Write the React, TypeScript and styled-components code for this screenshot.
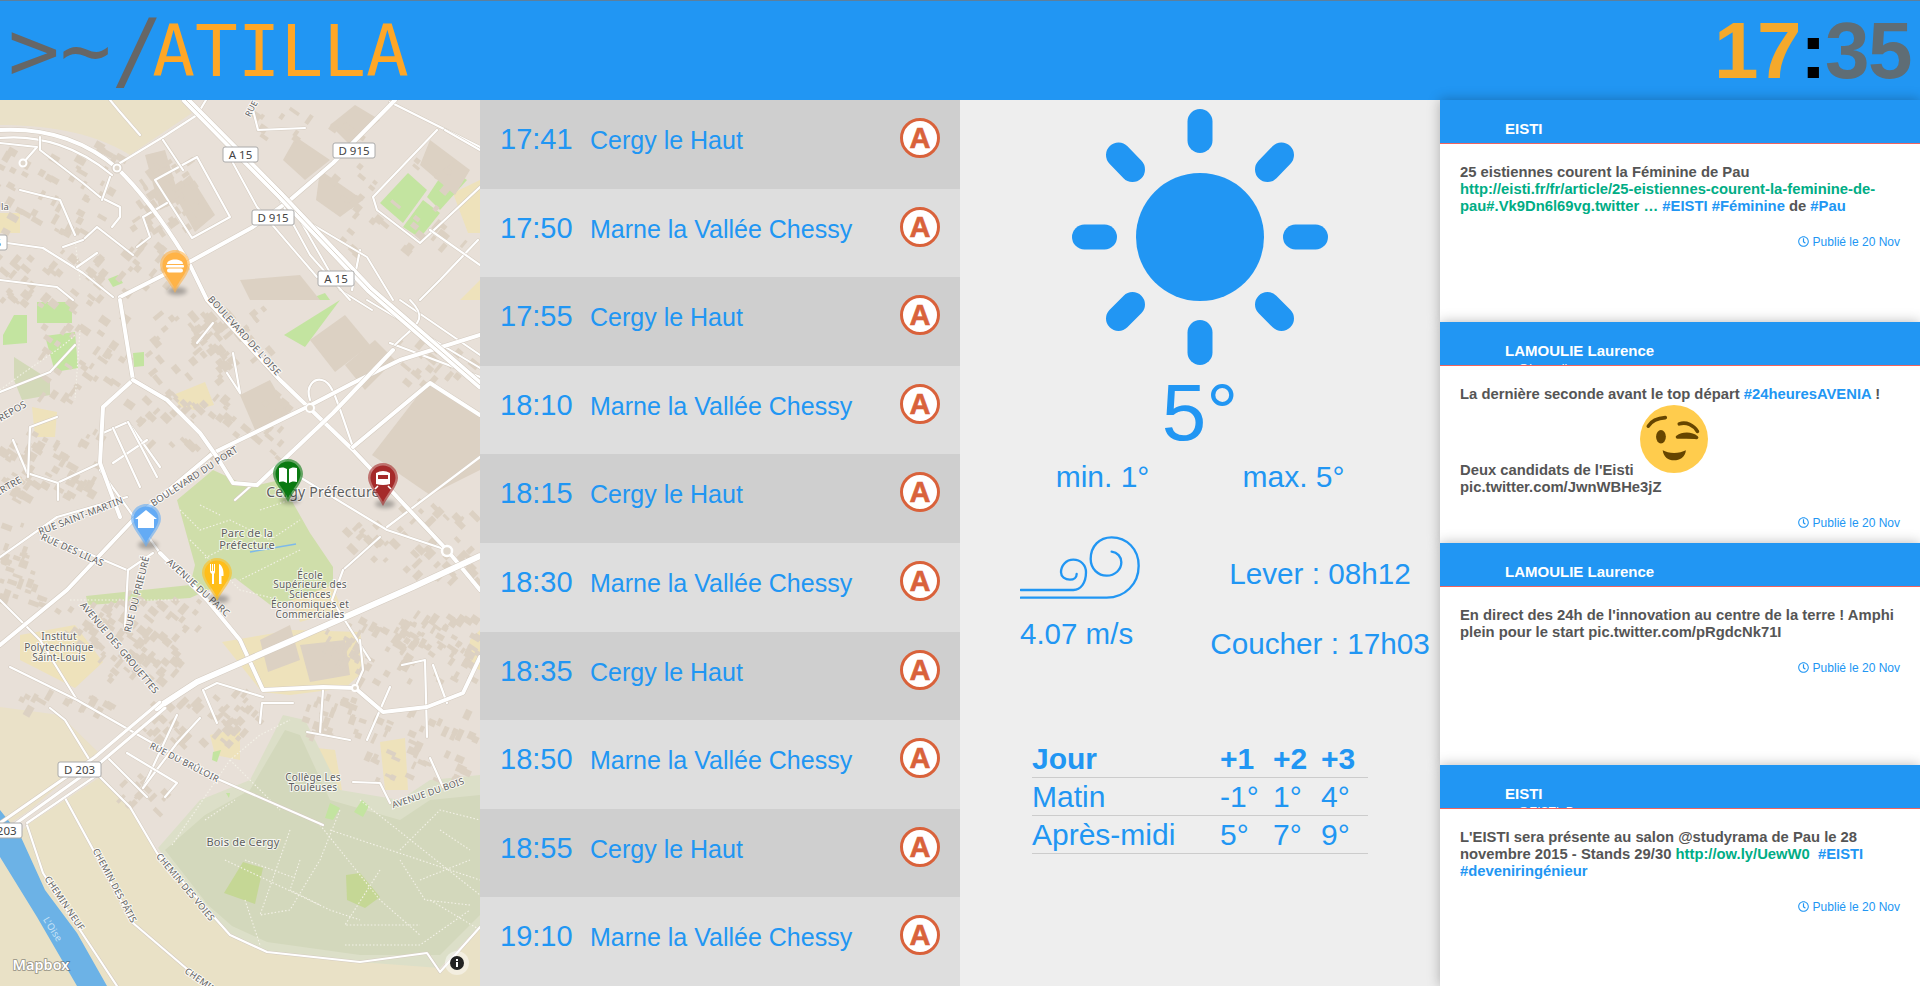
import React from "react";
import styled, { createGlobalStyle } from "styled-components";
import { FaRegClock } from "react-icons/fa";

const Global = createGlobalStyle`
  html, body { margin: 0; padding: 0; height: 100%; overflow: hidden; background: #fff; }
  #root { height: 986px; }
  * { box-sizing: border-box; }
`;

const BLUE = "#2196f3";
const SANS = `"Liberation Sans", Arial, sans-serif`;
const MONO = `"DejaVu Sans Mono", "Liberation Mono", monospace`;

const Page = styled.div`
  width: 1920px;
  height: 986px;
  display: flex;
  flex-direction: column;
  font-family: ${SANS};
  color: ${BLUE};
`;
const TopBar = styled.header`
  flex: 0 0 100px;
  background: ${BLUE};
  border-top: 1px solid #5d7f9c;
  display: flex;
  justify-content: space-between;
  padding: 0 9px 0 8px;
  overflow: hidden;
`;
const Logo = styled.div`
  font-family: ${MONO};
  line-height: 98px;
  white-space: nowrap;
  height: 98px;
`;
const Prompt = styled.span`
  font-size: 86px;
  color: #666;
`;
const Brand = styled.span`
  font-size: 71px;
  color: #ffa726;
  margin-left: -11px;
  vertical-align: 4px;
`;
const Clock = styled.div`
  font-size: 80px;
  font-weight: 700;
  line-height: 100px;
  letter-spacing: -1.5px;
`;
const ClockPart = styled.span<{ $c: string }>`
  color: ${(p) => p.$c};
`;
const Columns = styled.main`
  flex: 1;
  display: grid;
  grid-template-columns: repeat(4, 480px);
  min-height: 0;
`;
const MapPanel = styled.section`
  overflow: hidden;
  background: #e8e0d8;
  & > svg { display: block; }
`;
const Trains = styled.section`
  display: grid;
  grid-template-rows: repeat(10, 1fr);
`;
const TrainRow = styled.div<{ $odd: boolean }>`
  background: ${(p) => (p.$odd ? "#cfcfcf" : "#dedede")};
  display: flex;
  align-items: flex-start;
  padding: 19px 20px 0 20px;
  min-height: 0;
`;
const TrainTime = styled.span`
  flex: 0 0 90px;
  font-size: 29px;
  line-height: 41px;
`;
const TrainDest = styled.span`
  flex: 1;
  font-size: 25px;
  line-height: 43px;
`;
const LineBadge = styled.span`
  flex: 0 0 40px;
  width: 40px;
  height: 40px;
  margin-top: -1px;
  border-radius: 50%;
  border: 3px solid #d9623b;
  background: #fff;
  color: #d9623b;
  font-size: 29px;
  font-weight: 700;
  line-height: 34px;
  text-align: center;
  -webkit-text-stroke: 0.6px #d9623b;
`;
const Weather = styled.section`
  background: #eee;
  display: flex;
  flex-direction: column;
`;
const SunBox = styled.div`
  height: 274px;
  display: flex;
  justify-content: center;
`;
const Temp = styled.div`
  font-size: 80px;
  line-height: 80px;
  text-align: center;
  margin-top: -1px;
`;
const MinMax = styled.div`
  display: grid;
  grid-template-columns: 191px 191px;
  justify-content: center;
  font-size: 30px;
  line-height: 34px;
  text-align: center;
  margin-top: 7px;
  padding-right: 4px;
`;
const Sky = styled.div`
  display: grid;
  grid-template-columns: 240px 240px;
  margin-top: 41px;
`;
const WindCol = styled.div`
  padding-left: 60px;
  & > svg { display: block; }
`;
const WindValue = styled.div`
  font-size: 29.5px;
  line-height: 34px;
  margin-top: 16px;
`;
const SunCol = styled.div`
  text-align: center;
  font-size: 29.7px;
  line-height: 34px;
  white-space: nowrap;
  padding-top: 22px;
`;
const SunLine = styled.div`
  margin-bottom: 36px;
`;
const ForecastWrap = styled.div`
  margin-top: 43px;
`;
const Forecast = styled.table`
  width: 336px;
  margin: 0 0 0 72px;
  border-collapse: collapse;
  font-size: 30px;
  line-height: 37px;
`;
const FCell = styled.td<{ $w?: number }>`
  padding: 0;
  border-bottom: 1px solid #ccc;
  width: ${(p) => (p.$w ? `${p.$w}px` : "auto")};
`;
const FHead = styled(FCell).attrs({ as: "th" })`
  font-weight: 700;
  text-align: left;
`;
const Tweets = styled.section`
  display: grid;
  grid-template-rows: repeat(4, 1fr);
  min-height: 0;
`;
const Card = styled.article`
  background: #fff;
  box-shadow: 0 0 12px rgba(0, 0, 0, 0.28);
  min-height: 0;
`;
const CardHead = styled.div`
  height: 44px;
  background: ${BLUE};
  border-bottom: 1px solid #f0645f;
  padding: 20px 0 0 65px;
  overflow: hidden;
  color: #fff;
  font-weight: 700;
  font-size: 15px;
  line-height: 18px;
`;
const Handle = styled.div`
  padding-left: 12px;
  font-size: 12px;
  font-weight: 400;
`;
const CardBody = styled.div`
  padding: 20px 20px 0 20px;
`;
const TweetText = styled.div`
  font-size: 14.8px;
  font-weight: 700;
  line-height: 17px;
  color: #555;
`;
const Link = styled.span`
  color: #00ad85;
`;
const Tag = styled.span`
  color: ${BLUE};
`;
const Stamp = styled.div`
  margin-top: 19px;
  font-size: 12px;
  line-height: 16px;
  text-align: right;
  color: ${BLUE};
  & svg { vertical-align: -1px; margin-right: 4px; }
`;
const Wink = styled.svg`
  width: 68px;
  height: 68px;
  margin: 2px 0 0 6px;
  vertical-align: 2px;
`;
const MapLabel = styled.text<{ $size?: number; $c?: string; $halo?: boolean }>`
  font-family: "Noto Sans", "Open Sans", sans-serif;
  font-size: ${(p) => p.$size ?? 9.5}px;
  fill: ${(p) => p.$c ?? "#5f5f5f"};
  stroke: ${(p) => (p.$halo === false ? "none" : "rgba(255, 255, 255, 0.75)")};
  stroke-width: 2px;
  paint-order: stroke;
  text-anchor: middle;
  letter-spacing: 0.2px;
`;
const ShieldText = styled.text`
  font-family: "Noto Sans", sans-serif;
  font-size: 11.5px;
  fill: #444;
  text-anchor: middle;
`;
const MapboxMark = styled.text`
  font-family: "Noto Sans", "Open Sans", sans-serif;
  font-size: 14.5px;
  font-weight: 600;
  fill: #fff;
  stroke: rgba(70, 70, 70, 0.55);
  stroke-width: 1.6px;
  paint-order: stroke;
  text-anchor: middle;
`;

/* ---------- map data: coordinates are page pixels ---------- */
function rng(seed: number) {
  let s = seed;
  return () => {
    s = (s * 16807) % 2147483647;
    return s / 2147483647;
  };
}
type Zone = [number, number, number, number, number, number];
const zones: Zone[] = [
  [136, 160, 60, 70, 40, 55], [0, 140, 120, 90, 50, 30], [0, 250, 110, 50, 40, 40], [40, 300, 90, 100, 40, 35],
  [150, 310, 100, 70, 50, 50], [145, 385, 60, 60, 30, 45], [215, 390, 70, 70, 30, 40], [10, 430, 90, 70, 50, 30],
  [0, 520, 40, 90, 30, 20], [60, 600, 70, 40, 30, 35], [120, 590, 80, 50, 30, 40], [100, 640, 80, 40, 36, 40],
  [20, 690, 90, 20, 16, 30], [140, 700, 110, 40, 40, 45], [210, 690, 50, 50, 18, 40], [330, 620, 150, 60, 70, 30],
  [300, 695, 60, 40, 26, 20], [370, 710, 110, 70, 44, 25], [400, 610, 80, 50, 40, 35], [125, 770, 40, 40, 14, 45],
  [340, 160, 130, 90, 40, 40], [400, 340, 80, 40, 20, 40], [250, 105, 130, 30, 16, 35], [400, 500, 80, 80, 40, 45],
  [210, 300, 60, 60, 24, 50], [330, 520, 70, 40, 16, 45], [120, 240, 70, 50, 26, 40], [0, 440, 40, 50, 16, 35],
];
const buildings: { x: number; y: number; w: number; h: number; a: number }[] = [];
{
  const r = rng(4242);
  zones.forEach(([x, y, w, h, n, a]) => {
    for (let i = 0; i < n; i++) {
      buildings.push({ x: x + r() * w, y: y + r() * h, w: 4 + r() * 8, h: 3 + r() * 5, a: a + (r() > 0.5 ? 90 : 0) });
    }
  });
}
const bigBlocks = [
  "M296 137 L330 160 L305 180 L283 160 Z", "M320 170 L363 200 L340 217 L316 200 Z", "M145 155 L165 150 L180 200 L160 210 Z",
  "M190 175 L215 215 L195 232 L172 190 Z", "M330 125 L355 105 L380 120 L350 145 Z", "M240 280 L300 275 L320 300 L250 300 Z",
  "M430 140 L470 170 L455 195 L420 165 Z", "M430 380 L480 415 L480 470 L430 495 L372 455 Z", "M345 365 L375 340 L395 360 L365 390 Z",
  "M310 340 L345 315 L370 345 L335 372 Z", "M240 395 L270 380 L290 415 L255 430 Z", "M260 640 L290 625 L300 660 L268 672 Z",
  "M300 645 L345 640 L350 675 L310 682 Z",
];
const schools = [
  "M0 213 H20 V233 H0 Z", "M32 407 L57 412 L55 437 L35 437 Z", "M173 395 L205 382 L214 405 L195 410 L180 407 Z",
  "M283 575 L325 566 L342 610 L300 622 Z", "M20 635 L75 625 L103 662 L75 688 L20 660 Z", "M222 642 L293 630 L360 632 L365 670 L345 688 L290 695 L262 692 Z",
  "M210 735 L240 728 L240 760 L215 755 Z", "M290 745 L335 750 L342 790 L325 817 L287 798 Z", "M380 742 L405 738 L408 790 L385 790 Z",
  "M453 193 L480 180 L480 233 L468 233 Z", "M460 300 L480 280 V300 Z", "M470 640 L480 630 L480 670 L468 665 Z",
];
const greens = [
  "M380 203 L408 173 L427 190 L403 223 Z", "M427 197 L447 167 L467 180 L440 210 Z", "M403 227 L423 200 L440 213 L420 238 Z",
  "M37 302 L72 302 L72 323 L37 323 Z", "M3 335 L14 315 L27 315 L27 343 L3 345 Z", "M45 336 L75 332 L78 368 L55 372 Z",
  "M133 353 L144 352 L144 366 L134 367 Z", "M284 335 L340 300 L305 347 Z", "M108 279 L118 275 L123 283 L113 287 Z",
  "M317 296 L325 293 L330 300 H317 Z", "M213 752 L221 750 L217 762 L212 760 Z", "M330 803 L340 808 L333 820 L325 818 Z",
  "M362 800 L369 806 L363 817 L354 812 Z", "M226 793 L230 793 L229 798 Z",
];
const road1 = [
  "M0 130 C40 128 82 138 117 168 C150 200 175 240 190 265 L207 300 L280 380 L353 450 L447 550 L480 590",
  "M395 100 L333 163 L290 200 L253 227 L193 260 L120 297",
  "M0 645 L67 590 L133 520 L213 453 L307 407 L353 383 L400 360 L480 335",
  "M120 300 L133 380 L103 407 L100 463 L120 517",
  "M133 380 L167 400 L200 433 L217 457 L233 483 L257 485 L333 413 L393 350",
  "M353 447 L430 383 L480 415",
  "M160 553 L207 600 L240 640 L263 690 L323 687 L355 688 L383 712 L427 707 L463 693 L480 657",
];
const road2 = [
  "M0 138 C40 134 80 148 112 175", "M120 163 L163 137 L197 115 L206 100", "M155 180 L197 157 L230 217 L192 238 Z", "M163 140 L183 170",
  "M437 130 L373 197 L377 210 L420 243 L480 187", "M390 102 L480 147", "M387 527 L480 457", "M343 570 L380 537",
  "M293 473 L387 530 L447 550", "M0 242 L43 248 L83 273 L113 297", "M40 137 L40 150 L83 183 L100 197 L120 207 L120 217 L112 227", "M0 143 L37 147 L23 163",
  "M102 200 L110 177", "M83 240 L97 227 L133 255", "M63 247 L83 240", "M137 247 L150 237 L143 217 L167 203", "M77 267 L97 253", "M0 280 L57 287 L73 300",
  "M0 392 L50 372 L75 345", "M0 557 L57 517 L127 497", "M40 533 L127 570", "M125 627 L128 570 L153 553", "M103 433 L128 422 L160 467", "M113 463 L147 440",
  "M113 428 L140 487", "M128 422 L157 477", "M57 483 L100 463", "M13 440 L27 473 L58 483 L58 500", "M28 477 L30 427 L57 417", "M197 343 L213 323", "M227 373 L240 393 L233 353",
  "M310 400 C305 385 315 378 322 380 C332 382 335 395 353 447", "M390 343 L480 377", "M0 600 L40 640 L77 700",
  "M100 470 L160 553", "M10 667 L77 700 L147 740 L220 780 L323 825", "M107 757 L147 797",
  "M50 708 L65 720 L100 777 L130 807 L157 853 L230 935 L267 952 L360 962 L427 953 L440 972 L480 927",
  "M65 798 L133 923 L207 986", "M27 825 L43 873 L80 930 L117 986", "M27 823 L100 773", "M203 690 L217 683 L263 697", "M203 690 L217 723", "M260 723 L262 703 L293 703",
  "M177 715 L143 788", "M200 718 L177 743 L143 788", "M127 753 L177 783 L165 797", "M323 690 L320 733",
  "M307 732 L350 740", "M390 687 L367 740", "M353 782 L380 783 L390 803", "M402 665 L425 660 L427 737", "M433 665 L447 703", "M430 758 L443 787",
  "M343 570 L332 600 L370 660", "M360 640 L363 670 L355 688", "M445 130 L480 150", "M253 110 L258 130 L305 128", "M20 190 L60 200 L75 235", "M253 484 L235 500",
  "M140 135 L120 112 L110 100", "M360 250 L352 290", "M478 240 L440 280 L420 300", "M430 230 L480 265",
];
const ramps = [
  "M233 163 L257 207 L317 277", "M293 213 L367 257 L393 300", "M300 220 L340 290 L372 310", "M280 200 L310 255 L350 300",
  "M367 300 L480 368", "M400 300 L480 355", "M410 300 C430 320 415 325 395 345", "M190 105 L280 195",
];
const paths = [
  "M180 510 L200 530 L230 520 L270 540 L300 520", "M190 540 L240 590 L280 600", "M205 558 L240 540", "M300 550 L240 580", "M0 390 C40 360 60 350 75 335",
  "M75 240 L80 280", "M80 330 L75 400", "M172 845 L230 760 L260 735 L290 720", "M230 760 L280 810", "M290 830 L260 915 L290 910 L320 860 L340 810", "M320 825 L380 900 L420 935",
  "M360 800 L480 895", "M330 830 L480 880", "M225 860 L330 910 L360 920", "M300 860 L290 890 L320 905", "M380 870 L345 925 L420 925", "M345 945 L420 945 L470 910",
  "M245 900 L260 945", "M400 850 L440 810 L480 820", "M420 880 L470 860", "M430 900 L480 930", "M70 600 L180 600",
  "M245 860 L295 878", "M205 820 L235 800", "M400 860 L425 900 L470 905", "M440 830 L470 850", "M200 505 L220 515 M260 510 L290 500",
];

const Road = ({ d, w }: { d: string; w: number }) => (
  <>
    <path d={d} fill="none" stroke="#d4cbc0" strokeWidth={w + 1} strokeLinejoin="round" strokeLinecap="round" />
    <path d={d} fill="none" stroke="#fff" strokeWidth={w} strokeLinejoin="round" strokeLinecap="round" />
  </>
);

const Shield = ({ x, y, w, t }: { x: number; y: number; w: number; t: string }) => (
  <g>
    <rect x={x} y={y} width={w} height={15} rx={2} fill="#fff" stroke="#aaa" strokeWidth={1} />
    <ShieldText x={x + w / 2} y={y + 11.5}>{t}</ShieldText>
  </g>
);
const Lab = ({ x, y, r = 0, t, s, c, halo }: { x: number; y: number; r?: number; t: string; s?: number; c?: string; halo?: boolean }) => (
  <MapLabel x={x} y={y} $size={s} $c={c} $halo={halo} transform={r ? `rotate(${r} ${x} ${y})` : undefined}>{t}</MapLabel>
);

const Pin = ({ x, y, c, children }: { x: number; y: number; c: string; children: React.ReactNode }) => (
  <g transform={`translate(${x} ${y})`}>
    <ellipse cx={17} cy={41} rx={10} ry={4} fill="#000" opacity={0.28} filter="url(#blur)" />
    <path d="M15 0 C6.7 0 0 6.7 0 15 C0 23 10 33 15 43 C20 33 30 23 30 15 C30 6.7 23.3 0 15 0 Z" fill={c} opacity={0.6} />
    <path d="M15 2.5 C8 2.5 2.5 8 2.5 15 C2.5 22.5 11 31 15 39 C19 31 27.5 22.5 27.5 15 C27.5 8 22 2.5 15 2.5 Z" fill={c} />
    {children}
  </g>
);

function MapDrawing() {
  return (
    <svg width={480} height={886} viewBox="0 100 480 886" xmlns="http://www.w3.org/2000/svg">
      <defs>
        <filter id="blur" x="-50%" y="-100%" width="200%" height="300%"><feGaussianBlur stdDeviation="2" /></filter>
      </defs>
      <rect x={0} y={100} width={480} height={886} fill="#e8e0d8" />
      <path d="M0 100 H180 L192 113 L130 155 C90 130 40 125 0 125 Z" fill="#eae1c8" />
      <path d="M0 707 L60 715 L98 752 L30 810 L0 830 Z" fill="#eae1c8" />
      <path d="M27 825 L100 777 L130 807 L157 853 L230 935 L267 952 L360 962 L427 953 L440 972 L480 927 V986 H0 V860 Z" fill="#e9e1c6" />
      {schools.map((d, i) => <path key={i} d={d} fill="#eee2bb" />)}
      <path d="M158 848 L200 800 L250 780 L283 715 L305 720 L340 790 L400 800 L430 780 L480 775 V925 L440 968 L360 962 L267 952 L230 935 L205 912 Z" fill="#dcdfc8" />
      <path d="M165 850 L205 815 L250 790 L285 730 L300 735 L330 800 L400 820 L430 800 L480 795 V915 L440 955 L360 955 L267 942 L232 926 L208 905 Z" fill="#d3d8bc" />
      <path d="M14 357 L50 380 L50 395 L22 400 L14 380 Z" fill="#d3d9b8" />
      <path d="M177 500 L213 470 L250 487 L280 480 L310 533 L333 567 L333 585 L273 607 L235 578 L190 598 L88 605 L86 596 L190 585 L195 565 Z" fill="#cfdeaa" />
      {greens.map((d, i) => <path key={i} d={d} fill="#c3e4a0" />)}
      <path d="M243 862 L263 868 L255 904 L224 893 Z" fill="#c5d795" />
      <path d="M346 875 L360 873 L380 897 L365 908 L347 900 Z" fill="#c5d795" />
      {bigBlocks.map((d, i) => <path key={i} d={d} fill="#dcd1c3" />)}
      {buildings.map((b, i) => (
        <rect key={i} x={b.x} y={b.y} width={b.w} height={b.h} fill="#dcd1c3" transform={`rotate(${b.a} ${b.x} ${b.y})`} />
      ))}
      <path d="M0 810 L20 835 L45 890 L77 933 L107 986 H77 L37 917 L0 857 Z" fill="#6cb2e6" />
      <path d="M250 552 L296 544" stroke="#7db9ea" strokeWidth={1.5} fill="none" />
      {paths.map((d, i) => <path key={i} d={d} fill="none" stroke="#f4f2e8" strokeWidth={1.1} strokeDasharray="1.5 2" />)}
      {road2.map((d, i) => <Road key={i} d={d} w={2.2} />)}
      {ramps.map((d, i) => <Road key={i} d={d} w={2} />)}
      {road1.map((d, i) => <Road key={i} d={d} w={4} />)}
      <Road d="M186 100 L280 195 L370 290 L480 385" w={8} />
      <path d="M186 100 L280 195 L370 290 L480 385" fill="none" stroke="#cfc6ba" strokeWidth={0.8} />
      <Road d="M480 556 L413 587 L293 640 L197 682 L157 708" w={6} />
      <Road d="M160 702 L95 757 L0 823" w={3} />
      <Road d="M165 708 L100 763 L4 832" w={3} />
      <circle cx={117} cy={168} r={5} fill="#fff" stroke="#d4cbc0" />
      <circle cx={117} cy={168} r={2.5} fill="#e0d8cd" />
      <circle cx={23} cy={163} r={3.5} fill="#e0d8cd" stroke="#fff" strokeWidth={2} />
      <circle cx={310} cy={408} r={4} fill="#e0d8cd" stroke="#fff" strokeWidth={2} />
      <circle cx={447} cy={551} r={5} fill="#e0d8cd" stroke="#fff" strokeWidth={2.5} />
      <circle cx={355} cy={688} r={3} fill="#e0d8cd" stroke="#fff" strokeWidth={2} />
      <Shield x={223} y={147} w={35} t="A 15" />
      <Shield x={333} y={143} w={42} t="D 915" />
      <Shield x={252} y={210} w={42} t="D 915" />
      <Shield x={318} y={271} w={36} t="A 15" />
      <Shield x={58} y={762} w={43} t="D 203" />
      <Shield x={-20} y={823} w={42} t="D 203" />
      <Shield x={-36} y={235} w={43} t="D 915" />
      <Lab x={254} y={110} r={-62} t="RUE" s={8.5} />
      <Lab x={5} y={210} t="la" s={9.5} />
      <Lab x={242} y={338} r={48} t="BOULEVARD DE L'OISE" />
      <Lab x={196} y={479} r={-33} t="BOULEVARD DU PORT" />
      <Lab x={82} y={519} r={-21} t="RUE SAINT-MARTIN" />
      <Lab x={71} y={553} r={24} t="RUE DES LILAS" />
      <Lab x={140} y={595} r={-76} t="RUE DU PRIEURÉ" />
      <Lab x={196} y={590} r={42} t="AVENUE DU PARC" />
      <Lab x={117} y={650} r={50} t="AVENUE DES GROUETTES" />
      <Lab x={14} y={414} r={-30} t="REPOS" />
      <Lab x={10} y={489} r={-30} t="ERTRE" />
      <Lab x={247} y={537} t="Parc de la" s={11} />
      <Lab x={247} y={549} t="Préfecture" s={11} />
      <Lab x={323} y={497} t="Cergy Préfecture" s={14} />
      <Lab x={310} y={579} t="École" s={10} />
      <Lab x={310} y={588} t="Supérieure des" s={10} />
      <Lab x={310} y={598} t="Sciences" s={10} />
      <Lab x={310} y={608} t="Économiques et" s={10} />
      <Lab x={310} y={618} t="Commerciales" s={10} />
      <Lab x={59} y={640} t="Institut" s={10} />
      <Lab x={59} y={651} t="Polytechnique" s={10} />
      <Lab x={59} y={661} t="Saint-Louis" s={10} />
      <Lab x={313} y={781} t="Collège Les" s={10} />
      <Lab x={313} y={791} t="Touleuses" s={10} />
      <Lab x={243} y={846} t="Bois de Cergy" s={11} />
      <Lab x={183} y={765} r={27} t="RUE DU BRÛLOIR" s={9} />
      <Lab x={429} y={796} r={-19} t="AVENUE DU BOIS" s={9} />
      <Lab x={183} y={889} r={50} t="CHEMIN DES VOIES" s={9} />
      <Lab x={112} y={887} r={62} t="CHEMIN DES PÂTIS" s={9} />
      <Lab x={62} y={905} r={56} t="CHEMIN NEUF" s={9} />
      <Lab x={50} y={931} r={58} t="L'Oise" s={9.5} c="#c7e3f7" halo={false} />
      <Lab x={199} y={983} r={35} t="CHEMIN" s={9} />
      <Pin x={160} y={250} c="#ffb347">
        <path d="M7 14 C7 8 23 8 23 14 Z" fill="#fff" />
        <rect x={6} y={15} width={18} height={2.5} rx={1} fill="#fff" />
        <rect x={7} y={18.5} width={16} height={4} rx={2} fill="#fff" />
      </Pin>
      <Pin x={131} y={504} c="#64abf5">
        <path d="M15 6 L26 15 H23 V24 H7 V15 H4 Z" fill="#fff" />
      </Pin>
      <Pin x={202} y={558} c="#ffbe1a">
        <path d="M9 6 V13 H10 V6 H11 V13 H12 V6 H13 V13 C13 15 12.5 15.5 12 16 V26 H10 V16 C9.5 15.5 8 15 8 13 V6 Z" fill="#fff" />
        <path d="M17 26 V6 C20 7 22 12 21.5 18 H19.5 V26 Z" fill="#fff" />
      </Pin>
      <Pin x={273} y={459} c="#0a7a12">
        <path d="M6 9 C9 8 12 8.5 14 10 V24 C12 22.5 9 22 6 23 Z M16 10 C18 8.5 21 8 24 9 V23 C21 22 18 22.5 16 24 Z" fill="#fff" />
      </Pin>
      <Pin x={368} y={463} c="#a52a2a">
        <path d="M8 10 Q15 6 22 10 V21 Q15 23 8 21 Z" fill="#fff" />
        <rect x={10} y={12} width={10} height={4} fill="#a52a2a" />
        <path d="M10 23 L7 26 M20 23 L23 26" stroke="#fff" strokeWidth={1.6} />
      </Pin>
      <MapboxMark x={41} y={970}>Mapbox</MapboxMark>
      <circle cx={457} cy={963} r={12} fill="#fff" opacity={0.45} />
      <circle cx={457} cy={963} r={7} fill="#222" />
      <rect x={456} y={962} width={2} height={5} fill="#fff" />
      <rect x={456} y={959} width={2} height={2} fill="#fff" />
    </svg>
  );
}

const rays: [number, number, number, number][] = [
  [1200, 121.5, 1200, 140.5], [1200, 332.5, 1200, 352.5], [1084.5, 237, 1104.5, 237], [1295.5, 237, 1315.5, 237],
  [1118.5, 155, 1132.5, 169.5], [1281.5, 155, 1267.5, 169.5], [1118.5, 318.5, 1132.5, 304.5], [1281.5, 318.5, 1267.5, 304.5],
];

function Sun() {
  return (
    <svg width={280} height={274} viewBox="1060 100 280 274">
      <circle cx={1200} cy={237} r={64} fill={BLUE} />
      {rays.map((r, i) => (
        <line key={i} x1={r[0]} y1={r[1]} x2={r[2]} y2={r[3]} stroke={BLUE} strokeWidth={25} strokeLinecap="round" />
      ))}
    </svg>
  );
}
function Wind() {
  return (
    <svg width={122} height={66} viewBox="180 78 366 198" fill="none" stroke={BLUE} strokeWidth={7} strokeLinecap="round">
      <path d="M182 266 H440 C495 266 536 225 536 170 C536 120 500 85 455 85 C418 85 392 112 392 150 C392 180 415 200 440 200 C465 200 484 182 484 160 C484 143 472 130 455 128" />
      <path d="M182 243 H340 C362 243 378 222 378 190 C378 168 362 152 340 152 C318 152 303 170 303 190 C303 203 315 212 330 212 C342 212 350 205 350 195" />
    </svg>
  );
}
function WinkFace() {
  return (
    <Wink viewBox="0 0 36 36">
      <circle cx={18} cy={18} r={18} fill="#ffcc4d" />
      <ellipse cx={11.1} cy={16.8} rx={2.6} ry={3.6} fill="#664500" />
      <path d="M4.4 11.2 C6 8.6 9 7 13.4 6.7" stroke="#664500" strokeWidth={1.9} strokeLinecap="round" fill="none" />
      <path d="M20.8 10 C24.5 8.8 28.4 10.6 30.4 14" stroke="#664500" strokeWidth={1.9} strokeLinecap="round" fill="none" />
      <path d="M19.8 17 C22.5 15 27 14.8 30 17.2 C27 16.8 23 17 19.8 17 Z" stroke="#664500" strokeWidth={1.8} strokeLinejoin="round" fill="#664500" />
      <path d="M12 24 C15 25.8 21 25.8 24.3 24 C24 27.8 21 29.3 18 29.3 C15 29.3 12.5 27.8 12 24 Z" fill="#664500" />
    </Wink>
  );
}

const trains = [
  ["17:41", "Cergy le Haut"], ["17:50", "Marne la Vallée Chessy"], ["17:55", "Cergy le Haut"], ["18:10", "Marne la Vallée Chessy"],
  ["18:15", "Cergy le Haut"], ["18:30", "Marne la Vallée Chessy"], ["18:35", "Cergy le Haut"], ["18:50", "Marne la Vallée Chessy"],
  ["18:55", "Cergy le Haut"], ["19:10", "Marne la Vallée Chessy"],
];

const TweetCard = ({ name, handle, children }: { name: string; handle?: string; children: React.ReactNode }) => (
  <Card>
    <CardHead>
      {name}
      {handle && <Handle>{handle}</Handle>}
    </CardHead>
    <CardBody>
      <TweetText>{children}</TweetText>
      <Stamp><FaRegClock size={11} />Publié le 20 Nov</Stamp>
    </CardBody>
  </Card>
);

export default function App() {
  return (
    <Page>
      <Global />
      <TopBar>
        <Logo>
          <Prompt>&gt;~/</Prompt>
          <Brand>ATILLA</Brand>
        </Logo>
        <Clock>
          <ClockPart $c="#f5a92b">17</ClockPart>
          <ClockPart $c="#000">:</ClockPart>
          <ClockPart $c="#5f6d75">35</ClockPart>
        </Clock>
      </TopBar>
      <Columns>
        <MapPanel><MapDrawing /></MapPanel>
        <Trains>
          {trains.map(([t, d], i) => (
            <TrainRow key={t} $odd={i % 2 === 0}>
              <TrainTime>{t}</TrainTime>
              <TrainDest>{d}</TrainDest>
              <LineBadge>A</LineBadge>
            </TrainRow>
          ))}
        </Trains>
        <Weather>
          <SunBox><Sun /></SunBox>
          <Temp>5°</Temp>
          <MinMax><span>min. 1°</span><span>max. 5°</span></MinMax>
          <Sky>
            <WindCol>
              <Wind />
              <WindValue>4.07 m/s</WindValue>
            </WindCol>
            <SunCol>
              <SunLine>Lever : 08h12</SunLine>
              <SunLine>Coucher : 17h03</SunLine>
            </SunCol>
          </Sky>
          <ForecastWrap>
            <Forecast>
              <tbody>
                <tr><FHead $w={188}>Jour</FHead><FHead $w={53}>+1</FHead><FHead $w={48}>+2</FHead><FHead>+3</FHead></tr>
                <tr><FCell>Matin</FCell><FCell>-1°</FCell><FCell>1°</FCell><FCell>4°</FCell></tr>
                <tr><FCell>Après-midi</FCell><FCell>5°</FCell><FCell>7°</FCell><FCell>9°</FCell></tr>
              </tbody>
            </Forecast>
          </ForecastWrap>
        </Weather>
        <Tweets>
          <TweetCard name="EISTI">
            25 eistiennes courent la Féminine de Pau <Link>http://eisti.fr/fr/article/25-eistiennes-courent-la-feminine-de-pau#.Vk9Dn6l69vg.twitter …</Link> <Tag>#EISTI</Tag> <Tag>#Féminine</Tag> de <Tag>#Pau</Tag>
          </TweetCard>
          <TweetCard name="LAMOULIE Laurence" handle="@lamoulie">
            La dernière seconde avant le top départ <Tag>#24heuresAVENIA</Tag> !<br />
            Deux candidats de l'Eisti<WinkFace /> pic.twitter.com/JwnWBHe3jZ
          </TweetCard>
          <TweetCard name="LAMOULIE Laurence">
            En direct des 24h de l'innovation au centre de la terre ! Amphi plein pour le start pic.twitter.com/pRgdcNk71I
          </TweetCard>
          <TweetCard name="EISTI" handle="@EISTI_Pau">
            L'EISTI sera présente au salon @studyrama de Pau le 28 novembre 2015 - Stands 29/30 <Link>http://ow.ly/UewW0</Link>&nbsp; <Tag>#EISTI</Tag> <Tag>#deveniringénieur</Tag>
          </TweetCard>
        </Tweets>
      </Columns>
    </Page>
  );
}
